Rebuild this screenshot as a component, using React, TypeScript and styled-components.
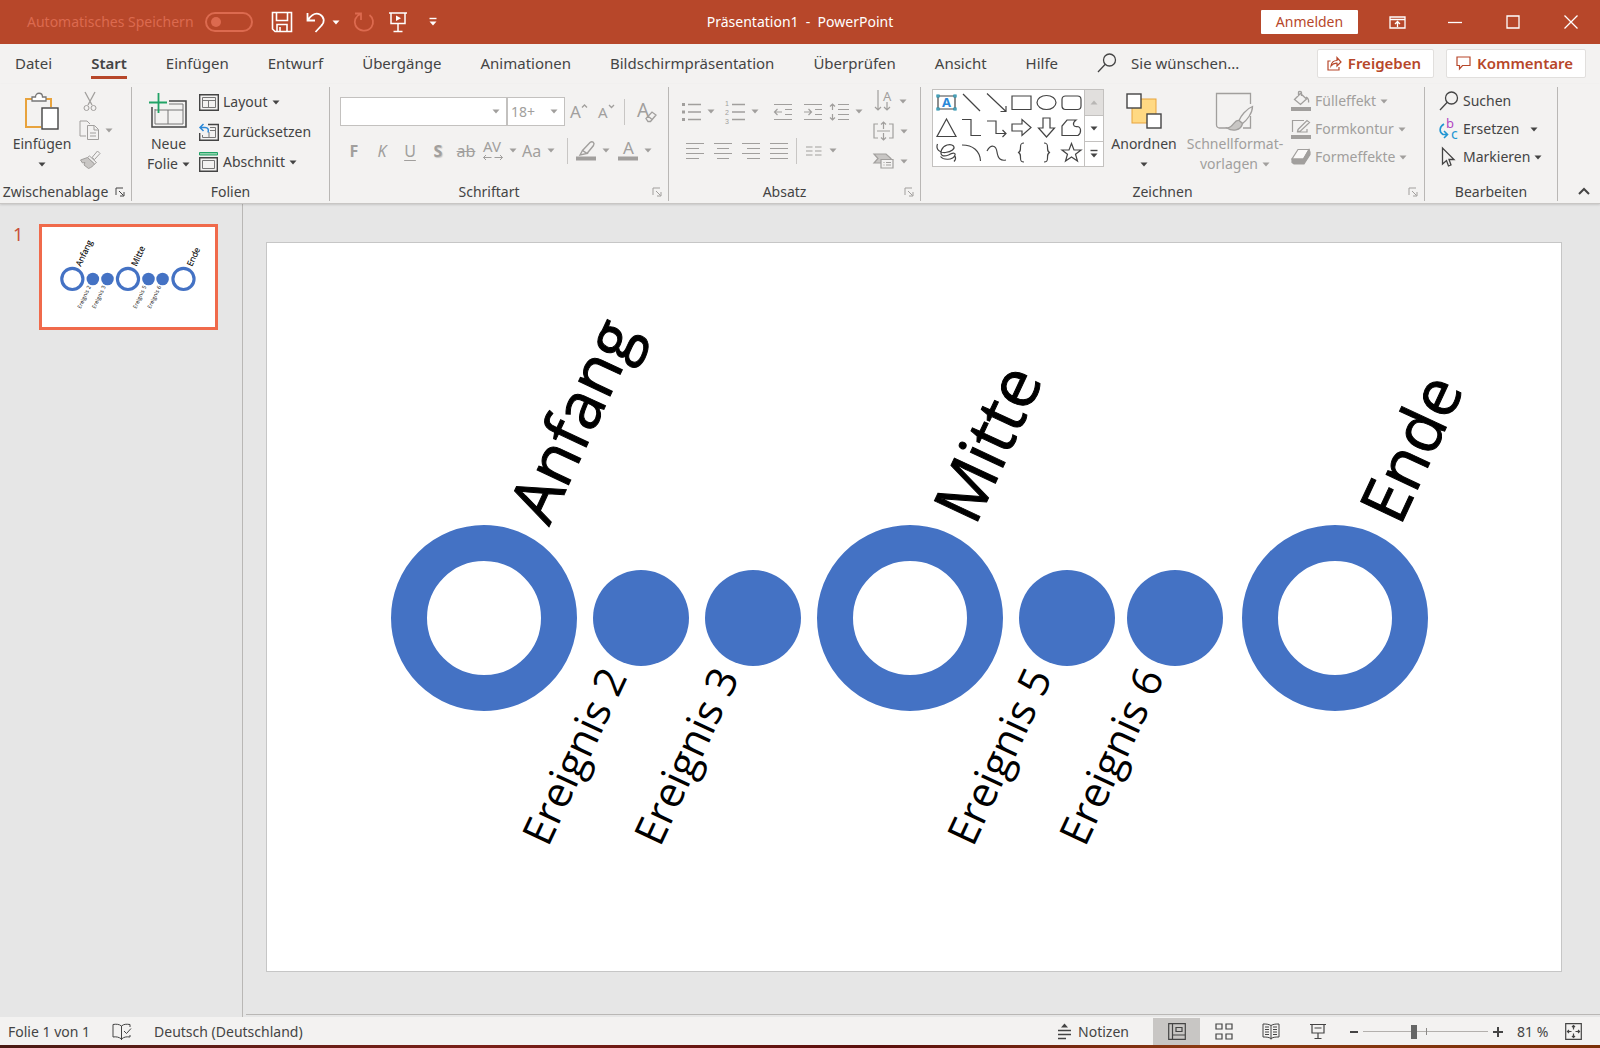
import React from 'react';
import styled, { createGlobalStyle, css } from 'styled-components';

const color = {
  brand: '#b7472a',
  brandSoft: '#dc6a4f',
  chrome: '#f3f2f1',
  canvas: '#e6e6e6',
  line: '#b9b7b5',
  text: '#444444',
  muted: '#a19f9d',
  shape: '#4472c4',
};

const GlobalStyle = createGlobalStyle`
  *, *::before, *::after { box-sizing: border-box; }
  body { margin: 0; background: ${color.canvas}; }
  body, button, input, select {
    font-family: "Noto Sans", "Open Sans", sans-serif;
    font-size: 14px;
    line-height: 20px;
    color: ${color.text};
  }
  button { margin: 0; padding: 0; border: 0; background: none; white-space: nowrap; }
  svg { display: block; flex: none; overflow: visible; }
`;

const Window = styled.div`
  display: flex;
  flex-direction: column;
  min-height: 100vh;
`;

/* ---------- Title bar ---------- */

const TitleBar = styled.header`
  display: grid;
  grid-template-columns: 1fr auto 1fr;
  align-items: center;
  height: 44px;
  background: ${color.brand};
  color: #fff;
`;

const QuickAccess = styled.div`
  display: flex;
  align-items: center;
  gap: 13px;
  padding-left: 27px;
`;

const AutoSave = styled.label`
  display: flex;
  align-items: center;
  gap: 11px;
  margin-right: 5px;
  color: ${color.brandSoft};
`;

const Switch = styled.input`
  appearance: none;
  display: flex;
  align-items: center;
  width: 48px;
  height: 20px;
  margin: 0;
  padding-left: 4px;
  border: 2px solid ${color.brandSoft};
  border-radius: 10px;
  &::before {
    content: "";
    width: 10px;
    height: 10px;
    border-radius: 50%;
    background: ${color.brandSoft};
  }
`;

const BarButton = styled.button<{ $soft?: boolean }>`
  display: flex;
  align-items: center;
  gap: 6px;
  color: ${(p) => (p.$soft ? color.brandSoft : '#fff')};
`;

const CustomizeButton = styled(BarButton)`
  padding-left: 8px;
`;

const DocumentTitle = styled.h1`
  margin: 0;
  font-size: 14px;
  font-weight: 400;
  white-space: pre;
`;

const WindowControls = styled.div`
  display: flex;
  align-items: center;
  justify-content: flex-end;
`;

const SignIn = styled.button`
  width: 97px;
  height: 24px;
  margin-right: 10px;
  border-radius: 1px;
  background: #fff;
  color: ${color.brand};
`;

const WindowButton = styled.button`
  display: grid;
  place-items: center;
  width: 58px;
  height: 44px;
  color: #fff;
`;

/* ---------- Tabs ---------- */

const TabBar = styled.div`
  display: flex;
  align-items: center;
  justify-content: space-between;
  height: 40px;
  padding: 0 14px 2px 15px;
  background: ${color.chrome};
`;

const Tabs = styled.nav`
  display: flex;
  align-items: center;
  gap: 39px;
`;

const Tab = styled.button<{ $active?: boolean }>`
  height: 32px;
  border-bottom: 3px solid transparent;
  padding-top: 3px;
  font-size: 15px;
  ${(p) =>
    p.$active &&
    css`
      border-bottom-color: ${color.brand};
      font-weight: 600;
    `}
`;

const TellMe = styled.label`
  display: flex;
  align-items: center;
  gap: 14px;
`;

const TellMeInput = styled.input`
  width: 140px;
  padding: 0;
  border: 0;
  background: none;
  font-size: 15px;
  &::placeholder { color: ${color.text}; opacity: 1; }
`;

const TabActions = styled.div`
  display: flex;
  gap: 12px;
`;

const ShareButton = styled.button`
  display: flex;
  align-items: center;
  gap: 6px;
  height: 29px;
  padding: 0 12px 0 9px;
  border: 1px solid #e1dfdd;
  border-radius: 2px;
  background: #fff;
  color: ${color.brand};
  font-size: 15px;
  font-weight: 600;
`;

/* ---------- Ribbon ---------- */

const RibbonBar = styled.section`
  display: flex;
  height: 120px;
  padding-top: 3px;
  background: ${color.chrome};
  border-bottom: 1px solid #c8c6c4;
  box-shadow: 0 1px 2px rgba(0, 0, 0, 0.14);
  position: relative;
`;

const Group = styled.section<{ $width: number }>`
  display: flex;
  flex-direction: column;
  justify-content: space-between;
  width: ${(p) => p.$width}px;
  height: 114px;
  border-right: 1px solid ${color.line};
`;

const GroupBody = styled.div<{ $inset?: number; $gap?: number }>`
  display: flex;
  align-items: flex-start;
  gap: ${(p) => p.$gap ?? 0}px;
  padding-left: ${(p) => p.$inset ?? 10}px;
`;

const GroupFooter = styled.footer`
  display: flex;
  align-items: center;
  height: 18px;
`;

const GroupName = styled.h2`
  flex: 1;
  margin: 0;
  font-size: 14px;
  line-height: 18px;
  font-weight: 400;
  text-align: center;
`;

const Launcher = styled.button<{ $muted?: boolean }>`
  width: 20px;
  padding-left: 4px;
  color: ${(p) => (p.$muted ? color.muted : color.text)};
`;

const CollapseRibbon = styled.button`
  align-self: flex-end;
  display: grid;
  place-items: center;
  flex: 1;
  height: 24px;
  padding-left: 10px;
`;

const LargeButton = styled.button<{ $width: number }>`
  display: flex;
  flex-direction: column;
  align-items: center;
  width: ${(p) => p.$width}px;
  padding-top: 3px;
  line-height: 20px;
  &:disabled { color: ${color.muted}; }
`;

const LargeIcon = styled.span`
  display: grid;
  place-items: center;
  height: 44px;
`;

const LargeLabel = styled.span`
  display: flex;
  align-items: center;
  justify-content: center;
  gap: 4px;
  height: 20px;
`;

const Stack = styled.div<{ $row?: number }>`
  display: grid;
  grid-auto-rows: ${(p) => p.$row ?? 29}px;
  justify-items: start;
`;

const RowButton = styled.button`
  display: flex;
  align-items: center;
  gap: 4px;
  &:disabled { color: ${color.muted}; }
`;

const SpacedCaret = styled.span`
  padding-left: 7px;
`;

const ToolRows = styled.div`
  display: grid;
  grid-template-rows: 29px 29px;
  gap: 10px;
  padding-top: 10px;
`;

const ToolRow = styled.div<{ $gap?: number }>`
  display: flex;
  align-items: center;
  gap: ${(p) => p.$gap ?? 0}px;
`;

const Tool = styled.button<{ $split?: boolean }>`
  display: flex;
  align-items: center;
  justify-content: ${(p) => (p.$split ? 'flex-start' : 'center')};
  gap: 6px;
  width: ${(p) => (p.$split ? 42 : 28)}px;
  height: 28px;
  font-size: 16px;
  &:disabled { color: ${color.muted}; }
`;

const Letter = styled.span<{ $kind: 'bold' | 'italic' | 'underline' | 'shadow' | 'strike' }>`
  ${(p) => p.$kind === 'bold' && 'font-weight: 700;'}
  ${(p) => p.$kind === 'italic' && 'font-style: italic;'}
  ${(p) => p.$kind === 'underline' && 'text-decoration: underline; text-underline-offset: 3px;'}
  ${(p) => p.$kind === 'shadow' && 'font-weight: 700; text-shadow: 1px 1px 1px #c8c6c4;'}
  ${(p) => p.$kind === 'strike' && 'text-decoration: line-through;'}
`;

const Rule = styled.span`
  width: 1px;
  height: 26px;
  margin: 0 8px 0 3px;
  background: #c8c6c4;
`;

const Combo = styled.span<{ $width: number }>`
  display: grid;
  grid-template-columns: 1fr 14px;
  align-items: center;
  width: ${(p) => p.$width}px;
  height: 29px;
  border: 1px solid #c3c1bf;
  background: #fff;
  color: ${color.muted};
`;

const ComboSelect = styled.select`
  appearance: none;
  width: 100%;
  padding: 0 0 0 3px;
  border: 0;
  background: none;
  color: ${color.muted};
  opacity: 1;
`;

const Gallery = styled.div`
  display: flex;
  margin: 2px 5px 0 0;
  height: 78px;
  border: 1px solid #c3c1bf;
  background: #fff;
`;

const ShapeGrid = styled.div`
  display: grid;
  grid-template-columns: repeat(6, 25px);
  grid-template-rows: repeat(3, 25px);
  padding-left: 1px;
`;

const ShapeButton = styled.button`
  display: grid;
  place-items: center;
`;

const GalleryScroll = styled.div`
  display: grid;
  grid-template-rows: repeat(3, 1fr);
  width: 19px;
  border-left: 1px solid #c3c1bf;
`;

const ScrollButton = styled.button`
  display: grid;
  place-items: center;
  & + & { border-top: 1px solid #c3c1bf; }
  &:disabled { background: #e1dfdd; color: #b8b6b4; }
`;

/* ---------- Workspace ---------- */

const Workspace = styled.main`
  display: grid;
  grid-template-columns: 243px 1fr;
  flex: 1;
`;

const SlideList = styled.aside`
  display: flex;
  align-items: flex-start;
  gap: 16px;
  padding: 20px 0 0 13px;
  border-right: 1px solid ${color.line};
`;

const SlideNumber = styled.span`
  width: 10px;
  font-size: 18px;
  color: #c8503a;
`;

const Thumbnail = styled.button`
  width: 179px;
  padding: 3px 2px 2px;
  border: 3px solid #f06a4b;
  background: #fff;
`;

const Stage = styled.section`
  padding: 38px 38px 40px 20px;
  margin: 0 0 2px 3px;
  border-bottom: 1px solid ${color.line};
`;

const Slide = styled.article`
  border: 1px solid #c6c6c6;
  background: #fff;
`;

const Drawing = styled.svg`
  width: 100%;
  height: auto;
  font-family: "Open Sans", "Noto Sans", sans-serif;
`;

const Heading = styled.text`
  fill: #000;
  stroke: #000;
  stroke-width: 1px;
`;

/* ---------- Status bar ---------- */

const StatusBar = styled.footer`
  display: flex;
  align-items: center;
  justify-content: space-between;
  height: 31px;
  background: ${color.chrome};
  border-top: 1px solid #c8c6c4;
  border-bottom: 3px solid;
  border-image: linear-gradient(90deg, #4a1a14, #7a2018 30%, #5a0f0c 55%, #8a3a12 75%, #7a3008) 0 0 3 0;
`;

const StatusLeft = styled.div`
  display: flex;
  align-items: center;
  gap: 22px;
  padding-left: 8px;
`;

const StatusRight = styled.div`
  display: flex;
  align-items: center;
  padding-right: 18px;
`;

const Notes = styled.button`
  display: flex;
  align-items: center;
  gap: 6px;
  margin-right: 24px;
`;

const ViewButton = styled.button<{ $active?: boolean }>`
  display: grid;
  place-items: center;
  width: 47px;
  height: 27px;
  background: ${(p) => (p.$active ? '#c8c6c4' : 'none')};
`;

const ZoomControls = styled.div`
  display: flex;
  align-items: center;
  gap: 5px;
  padding: 0 14px 0 9px;
`;

const ZoomSlider = styled.input`
  appearance: none;
  width: 125px;
  height: 14px;
  margin: 0;
  background:
    linear-gradient(#8a8886, #8a8886) 51% 50% / 1px 7px no-repeat,
    linear-gradient(#b3b0ad, #b3b0ad) 0 50% / 100% 1px no-repeat;
  &::-webkit-slider-thumb {
    appearance: none;
    width: 6px;
    height: 14px;
    background: #666;
  }
`;

const ZoomValue = styled.output`
  width: 48px;
`;

/* ---------- Icons ---------- */

const Glyph = styled.text<{ $size: number; $bold?: boolean; $fill?: string }>`
  font-size: ${(p) => p.$size}px;
  font-weight: ${(p) => (p.$bold ? 700 : 400)};
  fill: ${(p) => p.$fill ?? 'currentColor'};
  stroke: none;
`;

const Digit = styled(Glyph)`
  font-family: "Liberation Sans", sans-serif;
`;

type IconProps = { w?: number; h?: number; sw?: number; children: React.ReactNode };

const Icon = ({ w = 20, h = 20, sw = 1, children }: IconProps) => (
  <svg width={w} height={h} viewBox={`0 0 ${w} ${h}`} fill="none" stroke="currentColor" strokeWidth={sw} aria-hidden="true">
    {children}
  </svg>
);

const Caret = () => (
  <svg width="8" height="5" viewBox="0 0 8 5" fill="currentColor" aria-hidden="true">
    <path d="M0.5 0.5h7L4 4.5z" />
  </svg>
);

const SaveIcon = () => (
  <Icon w={22} h={22} sw={1.6}>
    <path d="M1.500 1.500h19v19H4l-2.500-2.500zM5.500 1.500v8h11v-8M6 20.500v-7h10v7M9 20v-4" />
  </Icon>
);
const UndoIcon = () => (
  <Icon w={20} h={22} sw={1.8}>
    <path d="M1.500 2v7.500H9M2 9C6 3 10 1.500 14 3.500c5 3 4.500 8 1.500 11L9.500 21" />
  </Icon>
);
const RedoIcon = () => (
  <Icon w={22} h={22} sw={1.8}>
    <path d="M2 2.500h6V9M7.500 3C2.500 5 .5 10 2.500 14.500c3 6 12 7 16 1.500 2.500-4 2-9-2-12" />
  </Icon>
);
const PresentIcon = () => (
  <Icon w={20} h={22} sw={1.500}>
    <path d="M1 2h18M3 2v10.500h14V2M10 13v7.500M5.500 20.500h9" />
    <path d="M8 4.500v5.500L13 7.200z" fill="currentColor" stroke="none" />
  </Icon>
);
const MoreIcon = () => (
  <Icon w={8} h={10} sw={1.400}>
    <path d="M0.500 1.500h7" />
    <path d="M0.500 4.500h7L4 8.500z" fill="currentColor" stroke="none" />
  </Icon>
);
const RibbonOptionsIcon = () => (
  <Icon w={17} h={13} sw={1.300}>
    <path d="M1 1h15v11H1zM1 3.500h15M8.500 11V5.500M6 8l2.500-2.500L11 8" />
  </Icon>
);
const SearchIcon = () => (
  <Icon sw={1.300}>
    <circle cx="12.500" cy="7" r="6" />
    <path d="M8.300 11.300 1 19" />
  </Icon>
);
const ShareIcon = () => (
  <Icon w={15} h={15} sw={1.200}>
    <path d="M3.500 5H1v9h11v-3M4 10c.5-4 3-5.500 6-5.500V1.500L14 6l-4 4V7.200C7.500 7 5.500 8 4 10z" />
  </Icon>
);
const CommentIcon = () => (
  <Icon w={15} h={14} sw={1.200}>
    <path d="M1 1h13v8.500H6.500L3.500 13V9.500H1z" />
  </Icon>
);
const LauncherIcon = () => (
  <Icon w={10} h={10}>
    <path d="M1 8V1h7M4 4l4.500 4.500M9 5v4H5" />
  </Icon>
);
const PasteIcon = () => (
  <Icon w={36} h={40}>
    <path d="M9 7H2v28h15M22 7h5v8" stroke="#e8a33d" strokeWidth="2" />
    <path d="M8 9V5h3.500c0-5 7-5 7 0H22v4z" fill="#fff" stroke="#777" strokeWidth="1.300" />
    <rect x="18" y="16" width="16" height="21" fill="#fff" stroke="#444" strokeWidth="1.400" />
  </Icon>
);
const CutIcon = () => (
  <Icon w={22} h={22}>
    <path d="M6 1l7 13M16 1L9 14" strokeWidth="1.300" />
    <circle cx="7.500" cy="17" r="2.500" />
    <circle cx="14.500" cy="17" r="2.500" />
  </Icon>
);
const CopyIcon = () => (
  <Icon w={22} h={22}>
    <path d="M7 16H1V1h7l3 3M8.500 5.500h7l4 4v10h-11zM15 6v4h4M11 13h6M11 16h6" />
  </Icon>
);
const BrushIcon = () => (
  <Icon w={22} h={20}>
    <path d="M13 7.500 18.500 1l2.500 2.500-5.500 6zM10.500 6l7 6.500-2 1.500-7-6.500z" fill="#f3f2f1" />
    <path d="M8.500 7.500 1.500 10l2 3 2.500-.5-1 2.500 4.500 3.500c3-1 5-3 6-4.500z" fill="#c8c6c4" />
  </Icon>
);
const NewSlideIcon = () => (
  <Icon w={40} h={38}>
    <path d="M20 8h17v26H3V14" strokeWidth="1.500" />
    <path d="M20 11h14v20H6V16M6 17h28M19 17v14" stroke="#777" />
    <path d="M9.500 0v20M0 9.500h18" stroke="#21a366" strokeWidth="1.800" />
  </Icon>
);
const LayoutIcon = () => (
  <Icon w={20} h={17}>
    <path d="M.7.700h18.600v15.600H.7z" strokeWidth="1.400" />
    <path d="M3.500 3.500h13v10h-13zM3.500 6.500h13M9.500 6.500v7" stroke="#777" />
  </Icon>
);
const ResetIcon = () => (
  <Icon w={20} h={18}>
    <path d="M9 1.500h10.300v15.800H.7V10" strokeWidth="1.400" />
    <path d="M11 4.500h5.500v10h-13V12M11 7.500h5.500M10 9v5" stroke="#777" />
    <path d="M1 4.500h5c3 0 4 2 3 5M4.500 1L1 4.500 4.500 8" stroke="#2b88d8" strokeWidth="1.500" />
  </Icon>
);
const SectionIcon = () => (
  <Icon w={20} h={20}>
    <path d="M.5.500h18v2.500H.5z" fill="#8fd3ac" stroke="#21a366" />
    <path d="M.7 5.700h17.600v13.600H.7z" strokeWidth="1.400" />
    <path d="M3.500 8.500h12v8h-12z" stroke="#777" />
  </Icon>
);
const SizedLetter = ({ down }: { down?: boolean }) => (
  <Icon w={20} h={18}>
    <Glyph x="1" y="15" $size={down ? 15 : 17}>A</Glyph>
    <path d={down ? 'M12 2 14.500 4.500 17 2' : 'M13 4.500 15.500 2 18 4.500'} strokeWidth="1.300" />
  </Icon>
);
const ClearFormatIcon = () => (
  <Icon w={22} h={22} sw={1.300}>
    <Glyph x="1" y="16" $size={19}>A</Glyph>
    <path d="M10 17.500 16 11l4 3-5.500 6.500h-2.500zM12 15l4.500 4" fill="#f3f2f1" />
  </Icon>
);
const SpacingIcon = () => (
  <Icon w={23} h={22}>
    <Glyph x="3" y="12" $size={15}>AV</Glyph>
    <path d="M3.500 17.500h8M6 15 3.500 17.500 6 20M14.500 17.500h8M20 15l2.500 2.500L20 20" />
  </Icon>
);
const HighlightIcon = () => (
  <Icon w={20} h={22}>
    <path d="M6.500 10.500 14 2.500c2.500-2 5 .5 3.500 3L11 13.500zM4 15l2.500-4.500 4.500 3z" strokeWidth="1.400" />
    <path d="M0 16.500h20v4H0z" fill="currentColor" stroke="none" />
  </Icon>
);
const FontColorIcon = () => (
  <Icon w={20} h={22}>
    <Glyph x="5" y="14" $size={17}>A</Glyph>
    <path d="M0 16.500h20v4H0z" fill="currentColor" stroke="none" />
  </Icon>
);
const BulletsIcon = () => (
  <Icon w={20} h={20}>
    <path d="M7 2.500h13M7 10h13M7 17.500h13" strokeWidth="1.300" />
    <path d="M1 2.500h3M1 10h3M1 17.500h3" strokeWidth="3" />
  </Icon>
);
const NumbersIcon = () => (
  <Icon w={20} h={20}>
    <path d="M7 2.500h13M7 10h13M7 17.500h13" strokeWidth="1.300" />
    <Digit x="0" y="4" $size={7}>1</Digit>
    <Digit x="0" y="13" $size={7}>2</Digit>
    <Digit x="0" y="22" $size={7}>3</Digit>
  </Icon>
);
const IndentIcon = ({ right }: { right?: boolean }) => (
  <Icon w={20} h={20} sw={1.200}>
    <path d="M1 2.500h18M12 7.500h7M12 12.500h7M1 17.500h18" />
    <path d={right ? 'M1 10h7M5.500 7 8.500 10l-3 3' : 'M9 10H2M4.500 7 1.500 10l3 3'} />
  </Icon>
);
const LineSpacingIcon = () => (
  <Icon w={20} h={20} sw={1.200}>
    <path d="M9 2.500h11M9 7.500h11M9 12.500h11M9 17.500h11M3.500 2v6M1 4.500 3.500 2 6 4.500M3.500 12v6M1 15.500 3.500 18 6 15.500" />
  </Icon>
);
const AlignIcon = ({ mode }: { mode: 'left' | 'center' | 'right' | 'justify' }) => {
  const path = {
    left: 'M1 2.500h18M1 7.500h13M1 12.500h18M1 17.500h13',
    center: 'M1 2.500h18M4 7.500h12M1 12.500h18M4 17.500h12',
    right: 'M1 2.500h18M6 7.500h13M1 12.500h18M6 17.500h13',
    justify: 'M1 2.500h18M1 7.500h18M1 12.500h18M1 17.500h18',
  }[mode];
  return <Icon sw={1.200}><path d={path} /></Icon>;
};
const ColumnsIcon = () => (
  <Icon w={18} h={20} sw={1.200}>
    <path d="M1 6h6.500M1 10h6.500M1 14h6.500M10 6h6.500M10 10h6.500M10 14h6.500" />
  </Icon>
);
const TextDirectionIcon = () => (
  <Icon w={20} h={22} sw={1.200}>
    <path d="M5 0v20M2 17 5 20l3-3M14 12v8M11 17l3 3 3-3" />
    <Glyph x="10" y="11" $size={13}>A</Glyph>
  </Icon>
);
const AlignTextIcon = () => (
  <Icon w={21} h={20} sw={1.200}>
    <path d="M5 3H1v14h4M16 3h4v14h-4M4 10h13M10.500 1v7M8 3.500 10.500 1 13 3.500M10.500 12v7M8 16.500l2.500 2.500 2.500-2.500" />
  </Icon>
);
const SmartArtIcon = () => (
  <Icon w={21} h={18} sw={1.200}>
    <path d="M1 2h12l5 4.500L14 11H1l4-4.500z" fill="#c8c6c4" />
    <path d="M8 7.500h12V16H8z" fill="#f3f2f1" />
    <path d="M10.500 10.500h1M13 10.500h5M10.500 13h1M13 13h5" />
  </Icon>
);
const ArrangeIcon = () => (
  <Icon w={36} h={38}>
    <rect x="6" y="6" width="24" height="24" fill="#ffd983" stroke="#e8a33d" />
    <rect x="1" y="1" width="14" height="14" fill="#fff" strokeWidth="1.400" />
    <rect x="21" y="21" width="14" height="14" fill="#fff" strokeWidth="1.400" />
  </Icon>
);
const QuickStyleIcon = () => (
  <Icon w={40} h={40} sw={1.300}>
    <path d="M12 36H4.500a3 3 0 0 1-3-3V1.500h34V12M35.500 24v12H28" fill="none" />
    <path d="M37.500 14.500c-6 2-12 10-13.500 14l3.500 3c4-3 10-10 10-17z" fill="#f3f2f1" />
    <path d="M24 28.500c-5-1.500-5 7-12 7.500 5 3.500 14 3 15.500-4.500z" fill="#c8c6c4" />
  </Icon>
);
const FillIcon = () => (
  <Icon w={20} h={20} sw={1.300}>
    <path d="M3.500 8.500 9.500 2.500l6 5.500-6 5.500zM7.500 5V1.500c0-1.500 3-1.500 3 0V5M15 6c2 1 3 3 2.500 5.500" />
    <path d="M0 16h20v4H0z" fill="currentColor" stroke="none" />
  </Icon>
);
const OutlineIcon = () => (
  <Icon w={20} h={20} sw={1.200}>
    <path d="M13 1.500H1.500V13M16 10v3H6M7 10.500 16 1.500l2.500 2-9 8.500-3 .5z" />
    <path d="M0 16h20v4H0z" fill="currentColor" stroke="none" />
  </Icon>
);
const EffectsIcon = () => (
  <Icon w={20} h={20} sw={1.200}>
    <path d="M7 2.500h11L12.500 12H1z" fill="#faf9f8" />
    <path d="M1 12v3.500l2 1.500h10l6-9.500V5l-1-2.500L12.500 12z" fill="#a19f9d" />
  </Icon>
);
const ReplaceIcon = () => (
  <Icon w={20} h={22} sw={1.600}>
    <path d="M5 6c-5 3-5 8-1 10.500h4M5 13l3.500 3.500L5 20" stroke="#2196d3" />
    <Glyph x="7" y="10" $size={13} $fill="#b146c2">b</Glyph>
    <Glyph x="12" y="21" $size={14} $fill="#2196d3">c</Glyph>
  </Icon>
);
const PointerIcon = () => (
  <Icon w={20} h={20} sw={1.300}>
    <path d="M3.500 1v16l4-3.500 2 5.500 2.500-1-2-5.500H15z" />
  </Icon>
);
const SpellIcon = () => (
  <Icon w={20} h={18}>
    <path d="M9.500 3C7 1 4 1 1 1.500v12.500c3-.5 6 0 8.500 2C12 14 14 13.500 18 14v-2M9.500 3v14M9.500 3C12 1 14 1 18 1.500V4M12 8l2.500 2.500L19 5.500" />
  </Icon>
);
const NotesIcon = () => (
  <Icon w={15} h={17} sw={1.400}>
    <path d="M1 7.500h13M1 11.500h13M1 15.500h8" />
    <path d="M4 4.500 7.500 0.500 11 4.500z" fill="currentColor" stroke="none" />
  </Icon>
);
const NormalViewIcon = () => (
  <Icon w={18} h={17} sw={1.200}>
    <path d="M.7.700h16.600v15.600H.7zM4.500 1v15M4.500 12h12.500M8 4.500h6v4H8z" />
  </Icon>
);
const SorterIcon = () => (
  <Icon w={18} h={17} sw={1.200}>
    <path d="M1 1h6v5H1zM11 1h6v5h-6zM1 11h6v5H1zM11 11h6v5h-6z" />
  </Icon>
);
const ReadingIcon = () => (
  <Icon w={18} h={17}>
    <path d="M9 2.500C6.500 1 4 1 1 1v13c3 0 5.500 0 8 1.500 2.500-1.500 5-1.500 8-1.500V1c-3 0-5.500 0-8 1.500zv14M3 4h4M3 6.500h4M3 9h4M3 11.500h4M11 4h4M11 6.500h4M11 9h4M11 11.500h4" />
  </Icon>
);
const ShowIcon = () => (
  <Icon w={18} h={17} sw={1.200}>
    <path d="M1 1.500h16M3 1.500V10h12V1.500M5.500 5h7M9 10v5.500M5.500 15.500h7" />
  </Icon>
);
const FitIcon = () => (
  <Icon w={17} h={17} sw={1.200}>
    <path d="M.7.700h15.600v15.600H.7zM8.500 2.500v4M7 4l1.500-1.500L10 4M8.500 14.500v-4M7 13l1.500 1.500L10 13M2.500 8.500h4M4 7 2.500 8.500 4 10M14.500 8.500h-4M13 7l1.500 1.500L13 10" />
  </Icon>
);

const shapes: { name: string; art: React.ReactNode }[] = [
  {
    name: 'Textfeld',
    art: (
      <>
        <path d="M2 4h17v13H2z" />
        <Glyph x="6" y="15" $size={13} $bold $fill="#2b88d8">A</Glyph>
        <path d="M1 3h2v2H1zM18 3h2v2h-2zM1 16h2v2H1zM18 16h2v2h-2z" stroke="#1a8aa8" fill="#fff" />
      </>
    ),
  },
  { name: 'Linie', art: <path d="M2 2l17 17" /> },
  { name: 'Pfeil', art: <path d="M1 1.500 20 19.500M20 14v5.500h-5.500" /> },
  { name: 'Rechteck', art: <path d="M1 4h19v13.500H1z" /> },
  { name: 'Ellipse', art: <ellipse cx="10.500" cy="10.500" rx="9.500" ry="7" /> },
  { name: 'Abgerundetes Rechteck', art: <rect x="1" y="4" width="19" height="13.500" rx="3.500" /> },
  { name: 'Dreieck', art: <path d="M10.500 2 20 19.500H1z" /> },
  { name: 'Verbinder', art: <path d="M1 2.500h9v16h10" /> },
  { name: 'Verbinder mit Pfeil', art: <path d="M1 4h9v12.500h10M16.500 13l3.500 3.500-3.500 3.500" /> },
  { name: 'Pfeil nach rechts', art: <path d="M1 7h10V2.500l9 8-9 8V14H1z" /> },
  { name: 'Pfeil nach unten', art: <path d="M7 1h7v10h4.500l-8 9-8-9H7z" /> },
  { name: 'Freihandform', art: <path d="M1 18.500V9L6 3h9c-4 3-3 7 1 6.500 4 0 5 6 1 9z" /> },
  { name: 'Skizze', art: <path d="M1.500 2c-2 5 2 9 8 8.500 6-.5 10-4 8-6.500-3-3-10-1-12 4-2 6 2 7 7 5 5-3 8-2 6 1-2 4-11 4.500-14 .5M19 14c1 2 .5 4-1 5.500" /> },
  { name: 'Bogen', art: <path d="M1 3c11 0 18 6 18.500 16" /> },
  { name: 'Kurve', art: <path d="M1 9c4-7 9-6 10 1s4 9 9 8" /> },
  { name: 'Geschweifte Klammer links', art: <path d="M13 1c-3 0-3.500 1-3.500 4s0 5-2.500 5.500c2.500.5 2.500 2.500 2.500 5.500s.5 4 3.500 4" /> },
  { name: 'Geschweifte Klammer rechts', art: <path d="M8 1c3 0 3.500 1 3.500 4s0 5 2.500 5.500c-2.500.5-2.500 2.500-2.500 5.500s-.5 4-3.500 4" /> },
  { name: 'Stern', art: <path d="M10.500 1.500 13 8h7l-5.500 4.200 2 6.800-6-4-6 4 2-6.800L1 8h7z" /> },
];

/* ---------- Slide content ---------- */

const milestones = [
  { x: 217, label: 'Anfang', tx: 282, ty: 284, size: 65 },
  { x: 643, label: 'Mitte', tx: 708, ty: 284, size: 67 },
  { x: 1068, label: 'Ende', tx: 1133, ty: 284, size: 65 },
];

const events = [
  { x: 374, label: 'Ereignis 2', tx: 281 },
  { x: 486, label: 'Ereignis 3', tx: 393 },
  { x: 800, label: 'Ereignis 5', tx: 706 },
  { x: 908, label: 'Ereignis 6', tx: 818 },
];

const Timeline = ({ ring = 36 }: { ring?: number }) => (
  <Drawing viewBox="0 0 1294 728" role="img" aria-label="Zeitachse">
    {milestones.map((m) => (
      <g key={m.label}>
        <circle cx={m.x} cy="375" r={93 - ring / 2} fill="none" stroke={color.shape} strokeWidth={ring} />
        <Heading transform={`translate(${m.tx} ${m.ty}) rotate(-65)`} fontSize={m.size}>{m.label}</Heading>
      </g>
    ))}
    {events.map((e) => (
      <g key={e.label}>
        <circle cx={e.x} cy="375" r="48" fill={color.shape} />
        <text transform={`translate(${e.tx} 605) rotate(-65)`} fontSize="42">{e.label}</text>
      </g>
    ))}
  </Drawing>
);

/* ---------- Ribbon pieces ---------- */

type RibbonGroupProps = {
  name: string;
  width: number;
  inset?: number;
  gap?: number;
  launcher?: 'active' | 'muted';
  children: React.ReactNode;
};

const RibbonGroup = ({ name, width, inset, gap, launcher, children }: RibbonGroupProps) => (
  <Group $width={width} aria-label={name}>
    <GroupBody $inset={inset} $gap={gap}>{children}</GroupBody>
    <GroupFooter>
      <GroupName>{name}</GroupName>
      {launcher && (
        <Launcher $muted={launcher === 'muted'} aria-label={`${name}: Optionen`}>
          <LauncherIcon />
        </Launcher>
      )}
    </GroupFooter>
  </Group>
);

type ToolItemProps = { label: string; split?: boolean; children: React.ReactNode };

const ToolItem = ({ label, split, children }: ToolItemProps) => (
  <Tool disabled $split={split} aria-label={label} title={label}>
    {children}
    {split && <Caret />}
  </Tool>
);

const tabs = ['Datei', 'Start', 'Einfügen', 'Entwurf', 'Übergänge', 'Animationen', 'Bildschirmpräsentation', 'Überprüfen', 'Ansicht', 'Hilfe'];

export default function App() {
  return (
    <Window>
      <GlobalStyle />
      <TitleBar>
        <QuickAccess>
          <AutoSave>
            Automatisches Speichern
            <Switch type="checkbox" disabled />
          </AutoSave>
          <BarButton aria-label="Speichern"><SaveIcon /></BarButton>
          <BarButton aria-label="Rückgängig"><UndoIcon /><Caret /></BarButton>
          <BarButton $soft aria-label="Wiederholen"><RedoIcon /></BarButton>
          <BarButton aria-label="Präsentation starten"><PresentIcon /></BarButton>
          <CustomizeButton aria-label="Symbolleiste anpassen"><MoreIcon /></CustomizeButton>
        </QuickAccess>
        <DocumentTitle>{'Präsentation1  -  PowerPoint'}</DocumentTitle>
        <WindowControls>
          <SignIn>Anmelden</SignIn>
          <WindowButton aria-label="Menüband-Anzeigeoptionen"><RibbonOptionsIcon /></WindowButton>
          <WindowButton aria-label="Minimieren"><Icon w={14} h={14} sw={1.300}><path d="M0 7.500h14" /></Icon></WindowButton>
          <WindowButton aria-label="Maximieren"><Icon w={14} h={14} sw={1.300}><path d="M1 1h12v12H1z" /></Icon></WindowButton>
          <WindowButton aria-label="Schließen"><Icon w={14} h={14} sw={1.300}><path d="M.5.500l13 13M13.500.500l-13 13" /></Icon></WindowButton>
        </WindowControls>
      </TitleBar>

      <TabBar>
        <Tabs>
          {tabs.map((tab) => (
            <Tab key={tab} $active={tab === 'Start'}>{tab}</Tab>
          ))}
          <TellMe>
            <SearchIcon />
            <TellMeInput type="search" placeholder="Sie wünschen..." aria-label="Sie wünschen" />
          </TellMe>
        </Tabs>
        <TabActions>
          <ShareButton><ShareIcon />Freigeben</ShareButton>
          <ShareButton><CommentIcon />Kommentare</ShareButton>
        </TabActions>
      </TabBar>

      <RibbonBar>
        <RibbonGroup name="Zwischenablage" width={132} gap={5} launcher="active">
          <LargeButton $width={64}>
            <LargeIcon><PasteIcon /></LargeIcon>
            <LargeLabel>Einfügen</LargeLabel>
            <LargeLabel><Caret /></LargeLabel>
          </LargeButton>
          <Stack>
            <RowButton disabled aria-label="Ausschneiden"><CutIcon /></RowButton>
            <RowButton disabled aria-label="Kopieren"><CopyIcon /><Caret /></RowButton>
            <RowButton disabled aria-label="Format übertragen"><BrushIcon /></RowButton>
          </Stack>
        </RibbonGroup>

        <RibbonGroup name="Folien" width={198} gap={4}>
          <LargeButton $width={53}>
            <LargeIcon><NewSlideIcon /></LargeIcon>
            <LargeLabel>Neue</LargeLabel>
            <LargeLabel>Folie<Caret /></LargeLabel>
          </LargeButton>
          <Stack $row={30}>
            <RowButton><LayoutIcon />Layout<Caret /></RowButton>
            <RowButton><ResetIcon />Zurücksetzen</RowButton>
            <RowButton><SectionIcon />Abschnitt<Caret /></RowButton>
          </Stack>
        </RibbonGroup>

        <RibbonGroup name="Schriftart" width={339} launcher="muted">
          <ToolRows>
            <ToolRow>
              <Combo $width={167}>
                <ComboSelect disabled aria-label="Schriftart"><option></option></ComboSelect>
                <Caret />
              </Combo>
              <Combo $width={58}>
                <ComboSelect disabled aria-label="Schriftgrad"><option>18+</option></ComboSelect>
                <Caret />
              </Combo>
              <ToolItem label="Schriftgrad vergrößern"><SizedLetter /></ToolItem>
              <ToolItem label="Schriftgrad verkleinern"><SizedLetter down /></ToolItem>
              <Rule />
              <ToolItem label="Formatierung löschen"><ClearFormatIcon /></ToolItem>
            </ToolRow>
            <ToolRow>
              <ToolItem label="Fett"><Letter $kind="bold">F</Letter></ToolItem>
              <ToolItem label="Kursiv"><Letter $kind="italic">K</Letter></ToolItem>
              <ToolItem label="Unterstrichen"><Letter $kind="underline">U</Letter></ToolItem>
              <ToolItem label="Schatten"><Letter $kind="shadow">S</Letter></ToolItem>
              <ToolItem label="Durchgestrichen"><Letter $kind="strike">ab</Letter></ToolItem>
              <ToolItem label="Zeichenabstand" split><SpacingIcon /></ToolItem>
              <ToolItem label="Groß-/Kleinschreibung" split>Aa</ToolItem>
              <Rule />
              <ToolItem label="Texthervorhebungsfarbe" split><HighlightIcon /></ToolItem>
              <ToolItem label="Schriftfarbe" split><FontColorIcon /></ToolItem>
            </ToolRow>
          </ToolRows>
        </RibbonGroup>

        <RibbonGroup name="Absatz" width={252} inset={12} gap={2} launcher="muted">
          <ToolRows>
            <ToolRow $gap={2}>
              <ToolItem label="Aufzählungszeichen" split><BulletsIcon /></ToolItem>
              <ToolItem label="Nummerierung" split><NumbersIcon /></ToolItem>
              <ToolItem label="Listenebene verringern"><IndentIcon /></ToolItem>
              <ToolItem label="Listenebene erhöhen"><IndentIcon right /></ToolItem>
              <ToolItem label="Zeilenabstand" split><LineSpacingIcon /></ToolItem>
            </ToolRow>
            <ToolRow>
              <ToolItem label="Linksbündig"><AlignIcon mode="left" /></ToolItem>
              <ToolItem label="Zentriert"><AlignIcon mode="center" /></ToolItem>
              <ToolItem label="Rechtsbündig"><AlignIcon mode="right" /></ToolItem>
              <ToolItem label="Blocksatz"><AlignIcon mode="justify" /></ToolItem>
              <Rule />
              <ToolItem label="Spalten" split><ColumnsIcon /></ToolItem>
            </ToolRow>
          </ToolRows>
          <Stack $row={30}>
            <ToolItem label="Textrichtung" split><TextDirectionIcon /></ToolItem>
            <ToolItem label="Text ausrichten" split><AlignTextIcon /></ToolItem>
            <ToolItem label="In SmartArt konvertieren" split><SmartArtIcon /></ToolItem>
          </Stack>
        </RibbonGroup>

        <RibbonGroup name="Zeichnen" width={504} inset={11} launcher="muted">
          <Gallery>
            <ShapeGrid>
              {shapes.map((shape) => (
                <ShapeButton key={shape.name} aria-label={shape.name}>
                  <Icon w={21} h={21} sw={1.200}>{shape.art}</Icon>
                </ShapeButton>
              ))}
            </ShapeGrid>
            <GalleryScroll>
              <ScrollButton disabled aria-label="Nach oben"><Icon w={8} h={5}><path d="M.5 4.500h7L4 .5z" fill="currentColor" stroke="none" /></Icon></ScrollButton>
              <ScrollButton aria-label="Nach unten"><Caret /></ScrollButton>
              <ScrollButton aria-label="Weitere Formen"><MoreIcon /></ScrollButton>
            </GalleryScroll>
          </Gallery>
          <LargeButton $width={70}>
            <LargeIcon><ArrangeIcon /></LargeIcon>
            <LargeLabel>Anordnen</LargeLabel>
            <LargeLabel><Caret /></LargeLabel>
          </LargeButton>
          <LargeButton $width={112} disabled>
            <LargeIcon><QuickStyleIcon /></LargeIcon>
            <LargeLabel>Schnellformat-</LargeLabel>
            <LargeLabel>vorlagen<Caret /></LargeLabel>
          </LargeButton>
          <Stack $row={28}>
            <RowButton disabled><FillIcon />Fülleffekt<Caret /></RowButton>
            <RowButton disabled><OutlineIcon />Formkontur<Caret /></RowButton>
            <RowButton disabled><EffectsIcon />Formeffekte<Caret /></RowButton>
          </Stack>
        </RibbonGroup>

        <RibbonGroup name="Bearbeiten" width={133} inset={14}>
          <Stack $row={28}>
            <RowButton><SearchIcon />Suchen</RowButton>
            <RowButton><ReplaceIcon />Ersetzen<SpacedCaret><Caret /></SpacedCaret></RowButton>
            <RowButton><PointerIcon />Markieren<Caret /></RowButton>
          </Stack>
        </RibbonGroup>

        <CollapseRibbon aria-label="Menüband reduzieren">
          <Icon w={12} h={8} sw={2}><path d="M1 7l5-5 5 5" /></Icon>
        </CollapseRibbon>
      </RibbonBar>

      <Workspace>
        <SlideList aria-label="Folien">
          <SlideNumber>1</SlideNumber>
          <Thumbnail aria-label="Folie 1"><Timeline ring={24} /></Thumbnail>
        </SlideList>
        <Stage>
          <Slide><Timeline /></Slide>
        </Stage>
      </Workspace>

      <StatusBar>
        <StatusLeft>
          <span>Folie 1 von 1</span>
          <SpellIcon />
          <span>Deutsch (Deutschland)</span>
        </StatusLeft>
        <StatusRight>
          <Notes><NotesIcon />Notizen</Notes>
          <ViewButton $active aria-label="Normal"><NormalViewIcon /></ViewButton>
          <ViewButton aria-label="Foliensortierung"><SorterIcon /></ViewButton>
          <ViewButton aria-label="Leseansicht"><ReadingIcon /></ViewButton>
          <ViewButton aria-label="Bildschirmpräsentation"><ShowIcon /></ViewButton>
          <ZoomControls>
            <button aria-label="Verkleinern"><Icon w={8} h={10} sw={2}><path d="M0 5h8" /></Icon></button>
            <ZoomSlider type="range" min={10} max={190} defaultValue={83} aria-label="Zoom" />
            <button aria-label="Vergrößern"><Icon w={10} h={10} sw={2}><path d="M0 5h10M5 0v10" /></Icon></button>
          </ZoomControls>
          <ZoomValue>81 %</ZoomValue>
          <button aria-label="An Fenster anpassen"><FitIcon /></button>
        </StatusRight>
      </StatusBar>
    </Window>
  );
}
